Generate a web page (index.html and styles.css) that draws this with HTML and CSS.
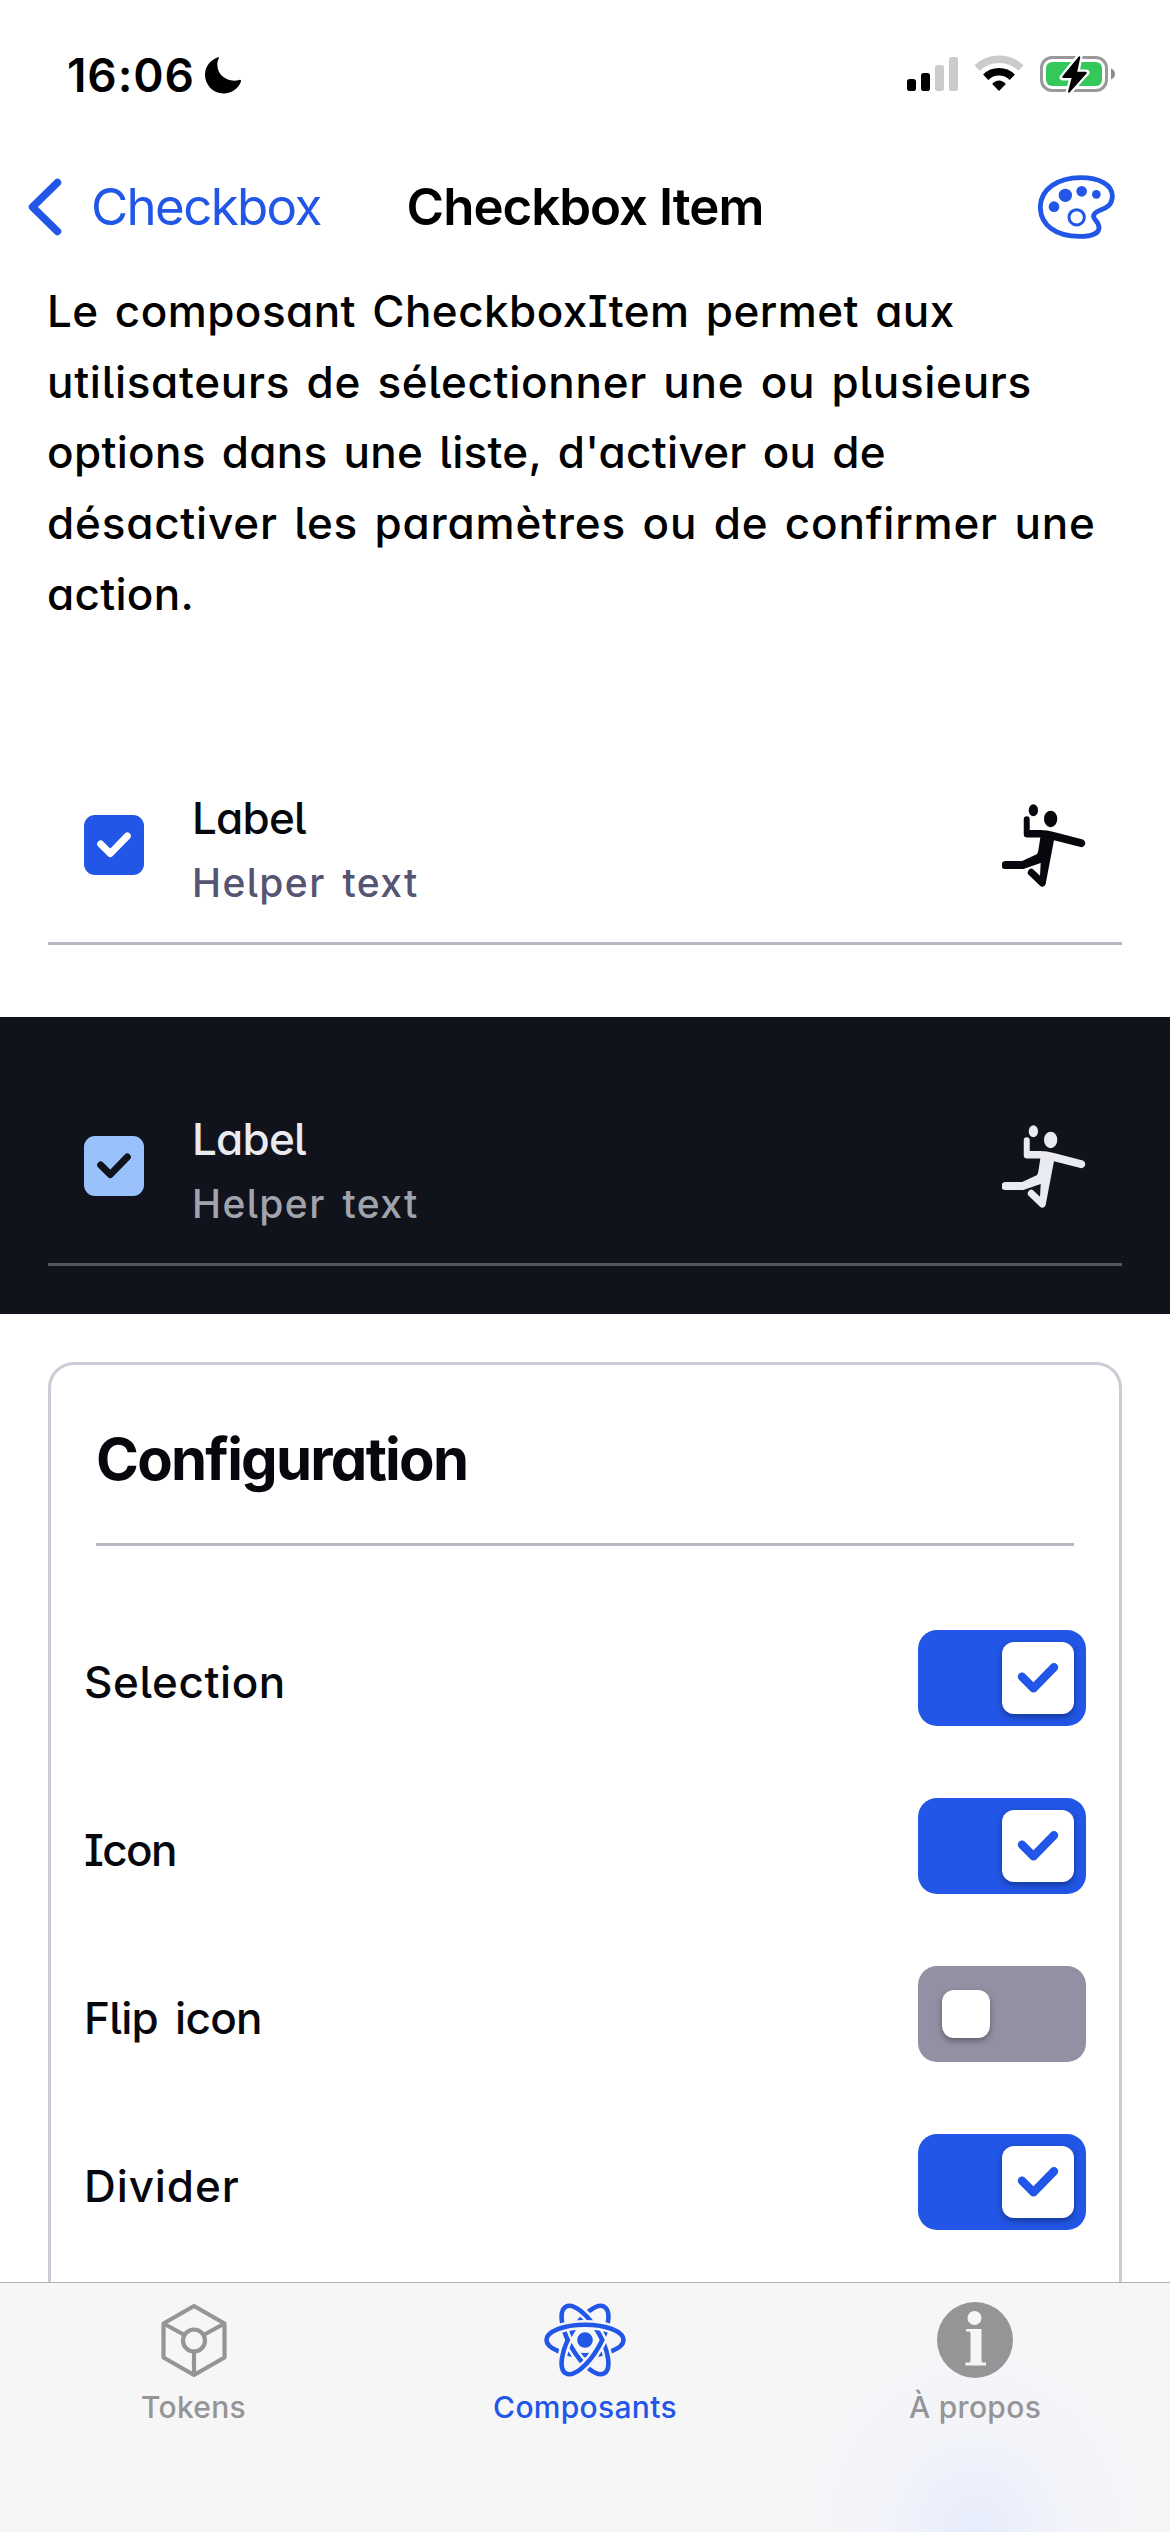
FILE: index.html
```
<!DOCTYPE html>
<html lang="fr">
<head>
<meta charset="utf-8">
<title>Checkbox Item</title>
<link rel="stylesheet" href="styles.css">
</head>
<body>
<svg class="defs" aria-hidden="true">
  <symbol id="handball" viewBox="126 99 252 250">
    <ellipse cx="220" cy="118" rx="14" ry="18"/>
    <ellipse cx="272" cy="144" rx="20" ry="25"/>
    <path d="M191 145a9 9 0 0 1 18 0V177H240Q262 177 282 183L369 206A12 12 0 0 1 365 229L282 208L257 340A10 10 0 0 1 240 345L208 314A10 10 0 0 1 220 296L240 315L242 277L192 294Q190 295 186 295H136A12 12 0 0 1 136 271H186L230 250Q234 246 235 238L241 200H201Q191 200 191 190Z"/>
  </symbol>
  <symbol id="tick" viewBox="0 0 72 72">
    <path d="M20 34.8L31.5 46.3L52 25.2" fill="none" stroke="currentColor" stroke-width="8.4" stroke-linecap="round" stroke-linejoin="round"/>
  </symbol>
</svg>

<header class="status">
  <div class="clock">
    <span>16:06</span>
    <svg class="moon" viewBox="0 0 36 38"><path d="M13.6 1.2C7 3 0 9 0 18.8C0 29 8 37.4 18.4 37.4C27 37.4 33.5 32 36 25.4C36.4 24.3 35.5 23.4 34.3 23.9C24 27 12.3 20.5 12.3 8.600C12.300 6 12.900 4 13.900 2.200C14.300 1.400 14 1 13.600 1.200Z"/></svg>
  </div>
  <svg class="indicators" viewBox="0 0 210 40">
    <rect x="1" y="24" width="9" height="12" rx="2.800"/>
    <rect x="15" y="18" width="9" height="18" rx="2.800"/>
    <rect x="29" y="10" width="9" height="26" rx="2.800" fill="#cbcbcb"/>
    <rect x="43" y="2" width="9" height="34" rx="2.800" fill="#cbcbcb"/>
    <g fill="none" stroke="#000">
      <path d="M71 13C83.300 1.200 102.700 1.200 115 13" stroke="#cbcbcb" stroke-width="7.500"/>
      <path d="M79.700 22.200C87.200 15 98.800 15 106.300 22.200" stroke-width="7.500"/>
    </g>
    <path d="M86.200 29C90 24.300 96 24.300 99.800 29L93 36Z"/>
    <rect x="135.500" y="2.500" width="65" height="33" rx="10.500" fill="none" stroke="#999" stroke-width="3"/>
    <rect x="140" y="7" width="56" height="24" rx="6" fill="#34c759"/>
    <path d="M205 13.500C210.300 15.500 210.300 22.500 205 24.500Z" fill="#8a8a8a"/>
    <path d="M173.500 1.500L156.500 22.500H166.500L162.500 37.500L180.500 17.500H170.500Z" stroke="#fff" stroke-width="6" stroke-linejoin="round"/>
    <path d="M173.300 2.300L157.300 22H166.900L163 36.700L179.800 17.800H170Z" stroke="#000" stroke-width="2" stroke-linejoin="round"/>
  </svg>
</header>

<nav class="navbar">
  <a class="back">
    <svg class="chevron" viewBox="0 0 34 58"><path d="M29.500 4.500L4.500 29L29.500 53.500" fill="none" stroke="currentColor" stroke-width="7.500" stroke-linecap="round" stroke-linejoin="round"/></svg>
    <span>Checkbox</span>
  </a>
  <h1>Checkbox Item</h1>
  <svg class="palette" viewBox="564 465 231 192">
    <path d="M571 562C571 508 622 473 692 473C748 473 787 494 787 528C787 555 770 563 752 570C734 577 730 583 731 590C732 600 747 606 747 623C747 640 724 649 688 649C618 649 571 615 571 562Z" fill="none" stroke="currentColor" stroke-width="14.500"/>
    <circle cx="612" cy="560" r="16"/><circle cx="646" cy="526" r="20"/><circle cx="695" cy="514" r="16"/><circle cx="739" cy="523" r="13"/>
    <circle cx="680" cy="592" r="23" fill="none" stroke="currentColor" stroke-width="9"/>
  </svg>
</nav>

<main>
  <p class="description">
    <span class="line l1">Le composant CheckboxItem permet aux</span>
    <span class="line l2">utilisateurs de sélectionner une ou plusieurs</span>
    <span class="line l3">options dans une liste, d'activer ou de</span>
    <span class="line l4">désactiver les paramètres ou de confirmer une</span>
    <span class="line l5">action.</span>
  </p>

  <section class="preview">
    <div class="item">
      <span class="box"><svg><use href="#tick"/></svg></span>
      <div class="texts"><div class="label">Label</div><div class="helper">Helper text</div></div>
      <svg class="player"><use href="#handball"/></svg>
    </div>
  </section>
  <section class="preview dark">
    <div class="item">
      <span class="box"><svg><use href="#tick"/></svg></span>
      <div class="texts"><div class="label">Label</div><div class="helper">Helper text</div></div>
      <svg class="player"><use href="#handball"/></svg>
    </div>
  </section>

  <section class="card">
    <h2>Configuration</h2>
    <div class="row"><span class="selection">Selection</span><span class="switch on"><i><svg><use href="#tick"/></svg></i></span></div>
    <div class="row"><span class="icon">Icon</span><span class="switch on"><i><svg><use href="#tick"/></svg></i></span></div>
    <div class="row"><span class="flip">Flip icon</span><span class="switch"><i></i></span></div>
    <div class="row"><span class="divider">Divider</span><span class="switch on"><i><svg><use href="#tick"/></svg></i></span></div>
  </section>
</main>

<footer class="tabbar">
  <div class="tab tokens">
    <svg viewBox="0 0 84 80" fill="none" stroke="currentColor" stroke-width="4.200" stroke-linejoin="round">
      <path d="M42 6L72.500 23.500V57.500L42 75L11.500 57.500V23.500Z"/>
      <circle cx="42" cy="40.500" r="11"/>
      <path d="M11.500 23.500L32.500 35M72.500 23.500L51.500 35M42 51.500V75"/>
    </svg>
    <span>Tokens</span>
  </div>
  <div class="tab active">
    <svg viewBox="0 0 84 80" fill="none">
      <defs>
        <clipPath id="upper"><rect width="84" height="40.500"/></clipPath>
        <clipPath id="lower"><rect y="40" width="84" height="40"/></clipPath>
        <g id="flat"><ellipse class="halo" cx="42" cy="40" rx="38.500" ry="15.300"/><ellipse class="orbit" cx="42" cy="40" rx="38.500" ry="15.300"/></g>
      </defs>
      <g clip-path="url(#upper)">
        <use href="#flat" transform="rotate(-60 42 40)"/>
        <use href="#flat" transform="rotate(60 42 40)"/>
        <use href="#flat"/>
      </g>
      <g clip-path="url(#lower)">
        <use href="#flat"/>
        <use href="#flat" transform="rotate(60 42 40)"/>
        <use href="#flat" transform="rotate(-60 42 40)"/>
      </g>
      <circle cx="42" cy="40" r="7.800" fill="currentColor"/>
    </svg>
    <span>Composants</span>
  </div>
  <div class="tab about">
    <svg viewBox="0 0 84 80">
      <circle cx="42" cy="40" r="38" fill="currentColor"/>
      <g fill="#f6f6f7"><circle cx="41.500" cy="18" r="7"/><path d="M33 29H48.500V61Q48.500 62.500 50 62.500H53V65.500H32.500V62.500H36Q37.500 62.500 37.500 61V33Q37.500 31.500 36 31.500H33Z"/></g>
    </svg>
    <span>À propos</span>
  </div>
</footer>
</body>
</html>
```
FILE: styles.css
```
* { box-sizing: border-box; }

body {
  margin: 0;
  width: 1170px;
  height: 2532px;
  overflow: hidden;
  display: flex;
  flex-direction: column;
  background: #fff;
  color: #07080d;
  font-family: Inter, "Open Sans", sans-serif;
}

h1, h2, p { margin: 0; }
svg { display: block; flex: none; }
.defs { display: none; }

.status {
  height: 141px;
  padding: 55px 53px 0 67px;
  display: flex;
  justify-content: space-between;
  align-items: flex-start;
  color: #000;
}
.clock { display: flex; gap: 10px; font-size: 46px; font-weight: 600; line-height: 40px; letter-spacing: 0.9px; }
.moon { width: 36px; height: 38px; margin-top: 1px; }
.indicators { width: 210px; height: 40px; margin-right: 1px; overflow: visible; }

.navbar {
  height: 132px;
  padding: 0 28px;
  display: grid;
  grid-template-columns: 1fr auto 1fr;
  align-items: center;
  font-size: 51px;
  line-height: 60px;
  letter-spacing: -1.65px;
  color: #2156e6;
}
.back { display: flex; align-items: center; gap: 29px; }
.chevron { width: 34px; height: 58px; }
.navbar h1 { font-size: 51px; font-weight: 600; letter-spacing: -1px; color: #000; white-space: nowrap; }
.palette { width: 77px; height: 64px; margin-right: 27px; justify-self: end; fill: currentColor; }

main { flex: 1; min-height: 0; overflow: hidden; }

.description {
  height: 471px;
  padding: 3px 47px 0;
  color: #000;
}
.line { display: block; line-height: 70.7px; white-space: nowrap; word-spacing: 4px; }
.l1 { letter-spacing: 0.45px; }
.l2 { letter-spacing: 0.7px; }
.l3 { letter-spacing: 0.3px; }
.l4 { letter-spacing: 0.8px; }
.l5 { letter-spacing: 0.3px; }

.description, .label, .helper, h2, .row {
  font-feature-settings: "cv11", "cv08", "cv05";
  font-size: 44px;
  font-weight: 500;
}

.preview { padding: 0 48px 72px; }
.item {
  height: 201px;
  padding: 4px 36px 0;
  display: flex;
  align-items: center;
  border-bottom: 3px solid #b8b7c3;
}
.box {
  width: 60px;
  height: 60px;
  border-radius: 11px;
  background: #2156e6;
  color: #fff;
  display: grid;
  place-items: center;
}
.box svg { width: 60px; height: 60px; }
.texts { flex: 1; margin: 8px 0 0 48px; }
.label { line-height: 66px; letter-spacing: -0.8px; }
.helper { margin-top: 2px; font-size: 39px; line-height: 60px; letter-spacing: 1.4px; word-spacing: 5px; color: #555472; }
.player { width: 84px; height: 83px; fill: currentColor; }

.dark { padding: 48px; background: #10131b; color: #e9ebf0; }
.dark .item { border-color: #54565e; }
.dark .box { background: #99c2fd; color: #10131b; }
.dark .helper { color: #a1a3ac; }

.card {
  height: 1300px;
  margin: 48px 48px 0;
  border: 3px solid #cccbd6;
  border-radius: 26px;
  padding: 0 33px;
}
h2 {
  height: 181px;
  margin: 0 12px 48px;
  padding: 59px 0 0 0;
  border-bottom: 3px solid #b8b7c3;
  font-size: 58px;
  font-weight: 700;
  line-height: 70px;
  letter-spacing: -1.75px;
}
.row {
  height: 168px;
  display: flex;
  align-items: center;
  justify-content: space-between;
}
.row > span:first-child { padding-top: 8px; }
.selection { letter-spacing: 0.6px; }
.icon { letter-spacing: -1.6px; }
.flip { letter-spacing: -0.7px; word-spacing: 6px; }
.divider { letter-spacing: 0.9px; }
.switch {
  width: 168px;
  height: 96px;
  border-radius: 19px;
  padding: 0 24px;
  display: flex;
  align-items: center;
  background: #9291a4;
}
.switch i { width: 48px; height: 48px; border-radius: 12px; background: #fff; box-shadow: 0 3px 6px rgba(0, 0, 0, 0.35); }
.switch.on { padding: 0 12px; justify-content: flex-end; background: #2156e6; color: #2156e6; }
.switch.on i { width: 72px; height: 72px; }
.switch svg { width: 72px; height: 72px; }

.tabbar {
  height: 250px;
  border-top: 1px solid #b2b2b4;
  background: radial-gradient(ellipse 210px 230px at 975px 250px, #e7ecfc, rgba(240, 243, 252, 0.6) 45%, rgba(246, 246, 247, 0) 100%), #f6f6f6;
  display: grid;
  grid-template-columns: repeat(3, 1fr);
}
.tab {
  padding: 17px 0 0;
  display: flex;
  flex-direction: column;
  align-items: center;
  color: #959597;
  font-size: 30px;
  font-weight: 500;
  line-height: 36px;
  letter-spacing: 0.3px;
}
.tab svg { width: 84px; height: 80px; margin-bottom: 9px; }
.tab.tokens { padding-right: 3px; }
.tab.active { color: #2156e6; }
.halo { stroke: #f6f6f6; stroke-width: 9.5px; }
.orbit { stroke: currentColor; stroke-width: 4.6px; }
```
